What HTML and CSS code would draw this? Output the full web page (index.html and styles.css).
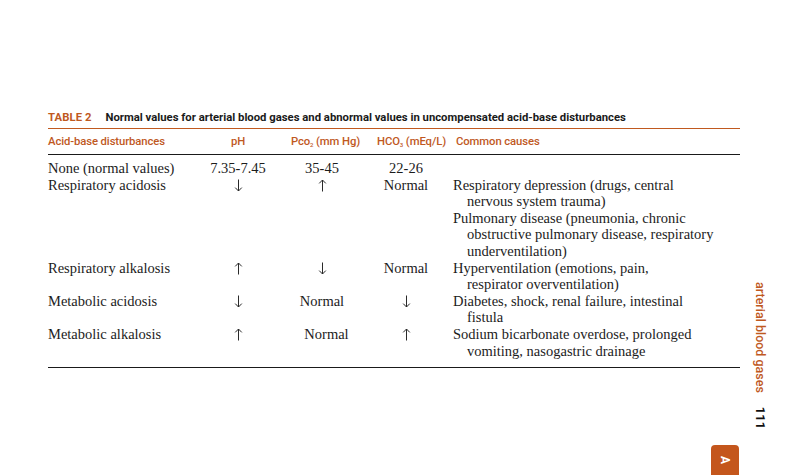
FILE: index.html
```html
<!DOCTYPE html>
<html>
<head>
    <title>Arterial blood gases - Table 2</title>
    <link rel="stylesheet" href="styles.css">
</head>
<body>
<div class="page">
    <div class="content">
        <div class="caption">
            <span class="caption-num">TABLE 2</span>
            <span class="caption-text">Normal values for arterial blood gases and abnormal values in uncompensated acid-base disturbances</span>
        </div>

        <div class="abg-table">
            <div class="head">Acid-base disturbances</div>
            <div class="head mid"><span>pH</span></div>
            <div class="head mid pco"><span>Pco<sub>2</sub> (mm Hg)</span></div>
            <div class="head mid hco"><span>HCO<sub>3</sub> (mEq/L)</span></div>
            <div class="head causes">Common causes</div>

            <div class="first">None (normal values)</div>
            <div class="mid first">7.35-7.45</div>
            <div class="mid first">35-45</div>
            <div class="mid first">22-26</div>
            <div class="causes first"></div>

            <div>Respiratory acidosis</div>
            <div class="mid"><svg class="arrow" viewBox="0 0 9 13"><path d="M4.5 0.5V12M1.2 8.6L4.5 12L7.8 8.6"/></svg></div>
            <div class="mid"><svg class="arrow" viewBox="0 0 9 13"><path d="M4.5 12.5V1M1.2 4.4L4.5 1L7.8 4.4"/></svg></div>
            <div class="mid">Normal</div>
            <div class="causes">
                <p>Respiratory depression (drugs, central<br>nervous system trauma)</p>
                <p>Pulmonary disease (pneumonia, chronic<br>obstructive pulmonary disease, respiratory<br>underventilation)</p>
            </div>

            <div>Respiratory alkalosis</div>
            <div class="mid"><svg class="arrow" viewBox="0 0 9 13"><path d="M4.5 12.5V1M1.2 4.4L4.5 1L7.8 4.4"/></svg></div>
            <div class="mid"><svg class="arrow" viewBox="0 0 9 13"><path d="M4.5 0.5V12M1.2 8.6L4.5 12L7.8 8.6"/></svg></div>
            <div class="mid">Normal</div>
            <div class="causes">
                <p>Hyperventilation (emotions, pain,<br>respirator overventilation)</p>
            </div>

            <div>Metabolic acidosis</div>
            <div class="mid"><svg class="arrow" viewBox="0 0 9 13"><path d="M4.5 0.5V12M1.2 8.6L4.5 12L7.8 8.6"/></svg></div>
            <div class="mid">Normal</div>
            <div class="mid"><svg class="arrow" viewBox="0 0 9 13"><path d="M4.5 0.5V12M1.2 8.6L4.5 12L7.8 8.6"/></svg></div>
            <div class="causes">
                <p>Diabetes, shock, renal failure, intestinal<br>fistula</p>
            </div>

            <div>Metabolic alkalosis</div>
            <div class="mid"><svg class="arrow" viewBox="0 0 9 13"><path d="M4.5 12.5V1M1.2 4.4L4.5 1L7.8 4.4"/></svg></div>
            <div class="mid shift">Normal</div>
            <div class="mid"><svg class="arrow" viewBox="0 0 9 13"><path d="M4.5 12.5V1M1.2 4.4L4.5 1L7.8 4.4"/></svg></div>
            <div class="causes">
                <p>Sodium bicarbonate overdose, prolonged<br>vomiting, nasogastric drainage</p>
            </div>
        </div>

        <div class="thumb-tab">A</div>
    </div>

    <div class="margin">
        <div class="side-label">
            <span class="running-head">arterial blood gases</span>
            <span class="folio">111</span>
        </div>
    </div>
</div>
</body>
</html>
```

FILE: styles.css
```css
* { box-sizing: border-box; }
html, body { margin: 0; padding: 0; background: #fff; }
body { width: 800px; height: 475px; overflow: hidden; }

.page { display: flex; height: 475px; }
.content {
    width: 740px;
    flex-shrink: 0;
    padding-left: 48px;
    padding-top: 110px;
    display: flex;
    flex-direction: column;
}

.caption {
    font-family: Roboto, "Liberation Sans", sans-serif;
    font-weight: 700;
    font-size: 11.3px;
    line-height: 16px;
    padding-bottom: 2px;
    border-bottom: 1.5px solid #c0591f;
    white-space: nowrap;
}
.caption-num { color: #c0591f; margin-right: 11px; letter-spacing: 0.1px; }
.caption-text { color: #1a1a1a; }

.abg-table {
    display: grid;
    grid-template-columns: 160px 60px 108px 60px 1fr;
    font-family: "Liberation Serif", serif;
    font-size: 14.5px;
    line-height: 16.6px;
    color: #1c1c1c;
    border-bottom: 1.5px solid #1a1a1a;
    padding-bottom: 8px;
}

.head {
    font-family: Roboto, "Liberation Sans", sans-serif;
    font-weight: 500;
    font-size: 11.3px;
    color: #c0591f;
    line-height: 14px;
    padding: 6px 0 5px;
    border-bottom: 1.5px solid #1a1a1a;
    white-space: nowrap;
    letter-spacing: -0.1px;
}
.head sub { font-size: 6px; vertical-align: -2px; line-height: 0; }
.head.pco { padding-left: 7px; }
.head.hco { padding-left: 11px; }

.first { padding-top: 5px; }
.mid { display: flex; justify-content: center; white-space: nowrap; }
.shift { padding-left: 9px; }
.arrow {
    width: 9px;
    height: 13px;
    margin-top: 2px;
    fill: none;
    stroke: #2a2a2a;
    stroke-width: 1;
}

.causes { padding-left: 17px; }
.head.causes { padding-left: 20px; }
.causes p { margin: 0; white-space: nowrap; padding-left: 14px; text-indent: -14px; }

.thumb-tab {
    margin-top: auto;
    align-self: flex-end;
    width: 28px;
    height: 30px;
    margin-right: 1px;
    background: #c4561c;
    border-radius: 4px 4px 0 0;
    color: #fff;
    font-family: Roboto, "Liberation Sans", sans-serif;
    font-weight: 700;
    font-size: 12px;
    writing-mode: vertical-rl;
    display: flex;
    align-items: center;
    justify-content: center;
}

.margin {
    width: 60px;
    flex-shrink: 0;
    padding-top: 282px;
    padding-left: 13px;
}
.side-label {
    writing-mode: vertical-rl;
    font-family: Roboto, "Liberation Sans", sans-serif;
    line-height: 14px;
    white-space: nowrap;
}
.running-head { color: #c0591f; font-weight: 500; font-size: 12.5px; margin-bottom: 10px; }
.folio { color: #111; font-weight: 700; font-size: 13px; }
```
